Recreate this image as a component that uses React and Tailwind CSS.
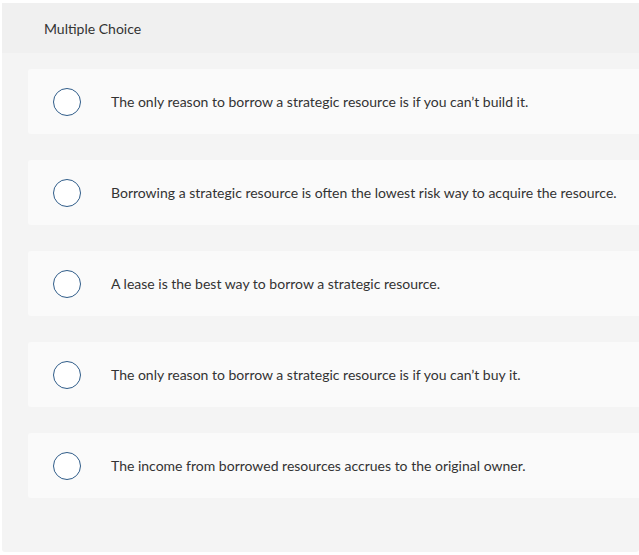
import React from 'react';

const choices = [
  "The only reason to borrow a strategic resource is if you can\u2019t build it.",
  "Borrowing a strategic resource is often the lowest risk way to acquire the resource.",
  "A lease is the best way to borrow a strategic resource.",
  "The only reason to borrow a strategic resource is if you can\u2019t buy it.",
  "The income from borrowed resources accrues to the original owner.",
];

function Choice({ text }) {
  return (
    <div className="h-[65px] bg-[#fafafa] rounded-l-[3px] flex items-center pl-[25px]">
      <span className="w-[28px] h-[28px] rounded-full border-[1.5px] border-[#2f5c89] bg-white shrink-0" />
      <span className="ml-[30px] text-[14px] leading-[18px] text-[#333] whitespace-nowrap">{text}</span>
    </div>
  );
}

export default function App() {
  return (
    <div className="w-[639px] h-[555px] bg-white pt-[3px] pl-[2px] font-['Lato',_sans-serif]">
      <div className="bg-[#f4f4f4] rounded-b-[3px] overflow-hidden">
        <div className="h-[50px] bg-[#f0f0f0] flex items-center pl-[42px] text-[14px] text-[#333]">
          Multiple Choice
        </div>
        <div className="flex flex-col gap-[26px] pt-[16px] pb-[54px] pl-[26px]">
          {choices.map((c, i) => (
            <Choice key={i} text={c} />
          ))}
        </div>
      </div>
    </div>
  );
}
